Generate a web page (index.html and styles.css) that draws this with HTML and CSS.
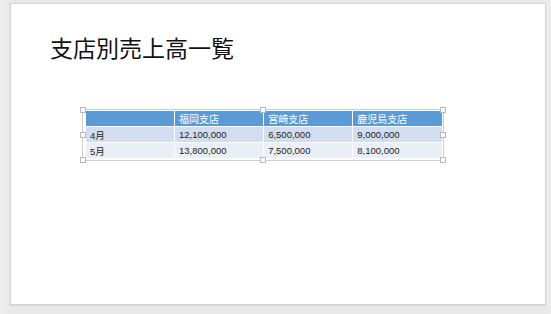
FILE: index.html
```html
<!DOCTYPE html>
<html lang="ja">
<head>
<meta charset="utf-8">
<link rel="stylesheet" href="styles.css">
</head>
<body>
<div class="slide">
  <h1 class="title">支店別売上高一覧</h1>
  <div class="frame">
    <table class="sales">
      <thead>
        <tr><th></th><th>福岡支店</th><th>宮崎支店</th><th>鹿児島支店</th></tr>
      </thead>
      <tbody>
        <tr class="odd"><td>4月</td><td>12,100,000</td><td>6,500,000</td><td>9,000,000</td></tr>
        <tr class="even"><td>5月</td><td>13,800,000</td><td>7,500,000</td><td>8,100,000</td></tr>
      </tbody>
    </table>
    <span class="h h-tl"></span>
    <span class="h h-tm"></span>
    <span class="h h-tr"></span>
    <span class="h h-ml"></span>
    <span class="h h-mr"></span>
    <span class="h h-bl"></span>
    <span class="h h-bm"></span>
    <span class="h h-br"></span>
  </div>
</div>
</body>
</html>
```

FILE: styles.css
```css
html, body {
  margin: 0;
  padding: 0;
}
body {
  width: 551px;
  height: 314px;
  background: linear-gradient(to right, #efefef 0px, #e8e8e8 10px, #e8e8e8 541px, #ececec 551px);
  overflow: hidden;
  padding: 3px 0 0 10px;
  box-sizing: border-box;
}
.slide {
  width: 536px;
  height: 302px;
  box-sizing: border-box;
  background: #fff;
  border: 1px solid #d3d3d3;
  box-shadow: 0 1px 1px rgba(0,0,0,0.06);
  padding: 28px 0 0 39px;
}
.title {
  margin: 0;
  font-family: "Noto Sans CJK JP", sans-serif;
  font-weight: 400;
  font-size: 23px;
  line-height: 30px;
  color: #111;
}
.frame {
  position: relative;
  margin: 47px 0 0 32px;
  width: 356px;
  border: 1px solid #cfcfcf;
  padding: 1px 1px 2px 3px;
  box-sizing: content-box;
}
.sales {
  border-collapse: collapse;
  table-layout: fixed;
  width: 356px;
  font-family: "Liberation Sans", "Noto Sans CJK JP", sans-serif;
  font-size: 9.5px;
  color: #222;
}
.sales th, .sales td {
  height: 15px;
  padding: 0 0 0 4px;
  text-align: left;
  font-weight: 400;
  border-left: 1px solid #fff;
  white-space: nowrap;
}
.sales th:first-child, .sales td:first-child { border-left: none; width: 84px; }
.sales thead tr { background: #5b9bd5; color: #fff; }
.sales th { font-family: "Noto Sans CJK JP", sans-serif; font-size: 10px; }
.sales tr.odd { background: #d2deef; border-top: 1px solid #fff; }
.sales tr.even { background: #eaeff7; border-top: 1px solid #fff; }
.h {
  position: absolute;
  width: 4px;
  height: 4px;
  background: #fff;
  border: 1px solid #b8b8b8;
}
.h-tl { left: -3px; top: -3px; }
.h-tm { left: 177px; top: -3px; }
.h-tr { right: -3px; top: -3px; }
.h-ml { left: -3px; top: 22px; }
.h-mr { right: -3px; top: 22px; }
.h-bl { left: -3px; bottom: -3px; }
.h-bm { left: 177px; bottom: -3px; }
.h-br { right: -3px; bottom: -3px; }
```
